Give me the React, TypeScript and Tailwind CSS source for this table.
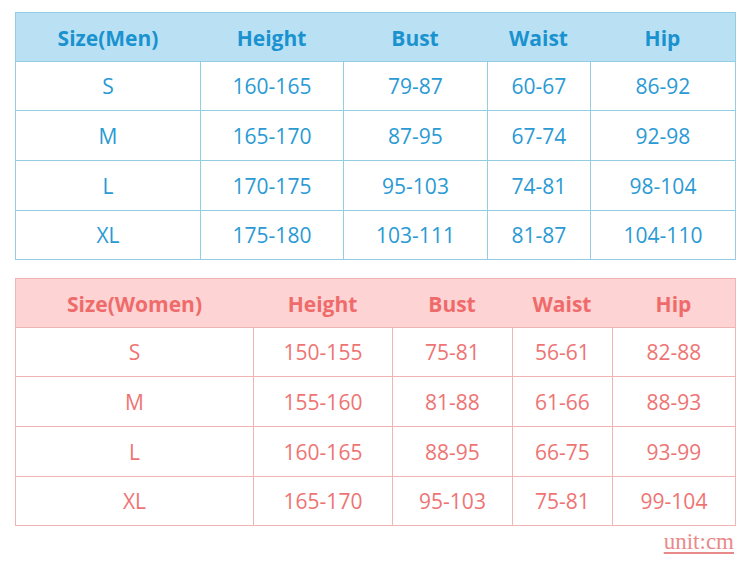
import React from "react";

const men = [
  ["S", "160-165", "79-87", "60-67", "86-92"],
  ["M", "165-170", "87-95", "67-74", "92-98"],
  ["L", "170-175", "95-103", "74-81", "98-104"],
  ["XL", "175-180", "103-111", "81-87", "104-110"],
];
const women = [
  ["S", "150-155", "75-81", "56-61", "82-88"],
  ["M", "155-160", "81-88", "61-66", "88-93"],
  ["L", "160-165", "88-95", "66-75", "93-99"],
  ["XL", "165-170", "95-103", "75-81", "99-104"],
];
const heights = ["h-[49px]", "h-[50px]", "h-[50px]", "h-[49px]"];

export default function App() {
  return (
    <div className="w-[750px] h-[564px] bg-white pl-[15px] pt-[12px] text-[21px]" style={{ fontFamily: '"Open Sans", "Noto Sans", sans-serif' }}>
      <div className="w-[721px] border border-[#93cde2]">
        <div className="grid grid-cols-[184px_143px_144px_103px_1fr] h-[48px] pt-[3px] bg-[#b9e1f3] text-[#1a92d0] font-bold items-center text-center">
          <div>Size(Men)</div>
          <div>Height</div>
          <div>Bust</div>
          <div>Waist</div>
          <div>Hip</div>
        </div>
        {men.map((r, ri) => (
          <div key={r[0]} className={"grid grid-cols-[184px_143px_144px_103px_1fr] border-t border-[#93cde2] text-[#2a9ad4] text-center " + heights[ri]}>
            {r.map((c, i) => (
              <div key={i} className={"flex items-center justify-center pt-[2px] " + (i > 0 ? "border-l border-[#93cde2]" : "")}>
                {c}
              </div>
            ))}
          </div>
        ))}
      </div>
      <div className="w-[721px] border border-[#f0b4b4] mt-[18px]">
        <div className="grid grid-cols-[237px_139px_120px_100px_1fr] h-[48px] pt-[3px] bg-[#fdd3d3] text-[#ef6b6b] font-bold items-center text-center">
          <div>Size(Women)</div>
          <div>Height</div>
          <div>Bust</div>
          <div>Waist</div>
          <div>Hip</div>
        </div>
        {women.map((r, ri) => (
          <div key={r[0]} className={"grid grid-cols-[237px_139px_120px_100px_1fr] border-t border-[#f0b4b4] text-[#ee7474] text-center " + heights[ri]}>
            {r.map((c, i) => (
              <div key={i} className={"flex items-center justify-center pt-[2px] " + (i > 0 ? "border-l border-[#f0b4b4]" : "")}>
                {c}
              </div>
            ))}
          </div>
        ))}
      </div>
      <div className="w-[719px] flex justify-end mt-[2px]">
        <span className="text-[#e98a8a] underline underline-offset-[3px] text-[23px] leading-[28px]" style={{ fontFamily: '"Liberation Serif", serif' }}>unit:cm</span>
      </div>
    </div>
  );
}
